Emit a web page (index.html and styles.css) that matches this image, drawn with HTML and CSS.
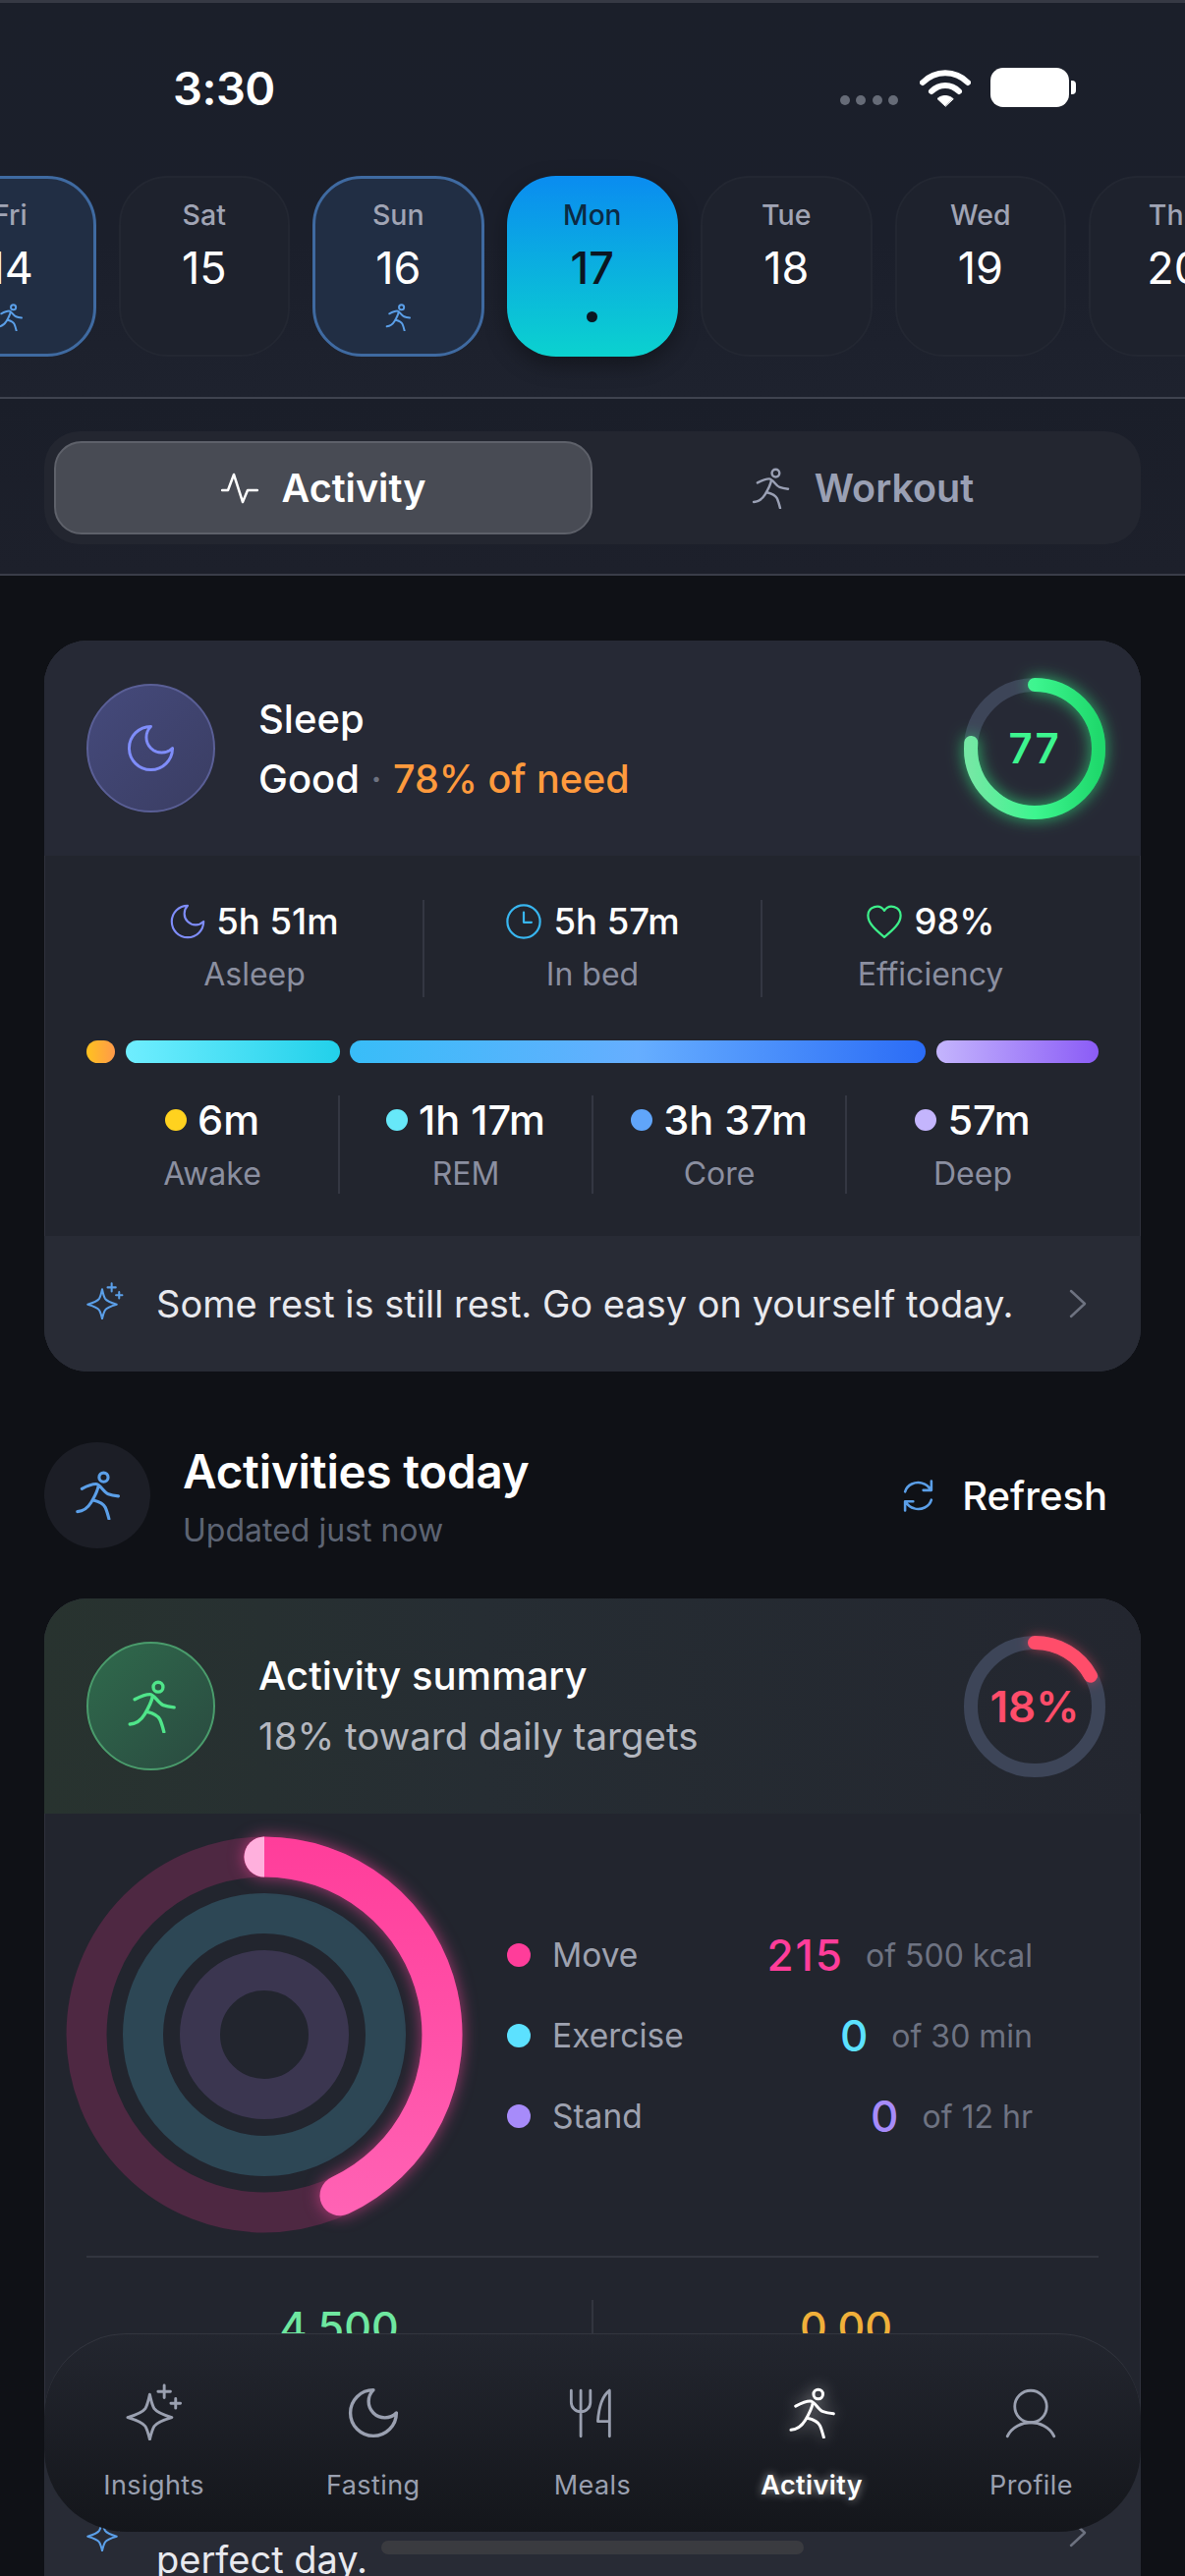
FILE: index.html
```html
<!DOCTYPE html>
<html lang="en">
<head>
<meta charset="utf-8">
<title>Activity</title>
<link rel="stylesheet" href="styles.css">
</head>
<body>
<svg class="defs" width="0" height="0" aria-hidden="true">
  <defs>
    <symbol id="runner" viewBox="0 0 24 24">
      <circle cx="15.1" cy="3.2" r="2.2"/>
      <path d="M4.5 8.8C7 7.5 9 6.5 11.3 6.5C13.5 6.5 15 10.5 17.4 11.4C19 12 20.5 12.2 22.3 12.4M12.6 7.3C12 10.5 10.5 13 9 15.5C7.5 18 5 19.8 2.3 20M10.1 14.4C12.5 15 15 16 15.9 17.9C16.5 19.2 17.2 21.5 17.7 23.5"/>
    </symbol>
    <symbol id="moon" viewBox="2 2 20 20">
      <path d="M12 3a6 6 0 0 0 9 9 9 9 0 1 1-9-9Z"/>
    </symbol>
    <symbol id="sparkle" viewBox="0 0 24 24">
      <path d="M10.1 4.6C10.8 8 11.2 9.3 12 10.6C13 12 15 13 19.4 14.3C15 15.6 13 16.6 12 18C11.2 19.3 10.8 20.6 10.1 23.6C9.4 20.6 9 19.3 8.2 18C7.2 16.6 5.2 15.6 0.8 14.3C5.2 13 7.2 12 8.2 10.6C9 9.3 9.4 8 10.1 4.6Z"/>
      <path d="M16.2 0.8V6M13.6 3.4H18.8M21 6.4V10.4M19 8.4H23"/>
    </symbol>
    <linearGradient id="scoreGreen" x1="0" y1="1" x2="0" y2="0">
      <stop offset="0" stop-color="#1fd96c"/>
      <stop offset="0.5" stop-color="#3df58f"/>
      <stop offset="1" stop-color="#74e8a4"/>
    </linearGradient>
    <linearGradient id="movePink" gradientUnits="userSpaceOnUse" x1="0" y1="0" x2="0" y2="380">
      <stop offset="0" stop-color="#ff3d9a"/>
      <stop offset="1" stop-color="#ff62b4"/>
    </linearGradient>
  </defs>
</svg>

<div class="screen">
  <header class="topbar">
    <div class="status">
      <span class="time">3:30</span>
      <div class="status-icons">
        <div class="signal"><i></i><i></i><i></i><i></i></div>
        <svg class="wifi" viewBox="0 0 52 40"><path d="M3 15C16 2 36 2 49 15" /><path d="M12 24C20 16 32 16 40 24"/><path class="wifi-dot" d="M26 39L18 31.5C22 27.5 30 27.5 34 31.5Z"/></svg>
        <div class="battery"><div class="battery-body"></div><div class="battery-nub"></div></div>
      </div>
    </div>
    <div class="dates">
      <div class="date done"><span class="dow">Fri</span><span class="num">14</span><svg class="mini ico"><use href="#runner"/></svg></div>
      <div class="date"><span class="dow">Sat</span><span class="num">15</span></div>
      <div class="date done"><span class="dow">Sun</span><span class="num">16</span><svg class="mini ico"><use href="#runner"/></svg></div>
      <div class="date today"><span class="dow">Mon</span><span class="num">17</span><i class="today-dot"></i></div>
      <div class="date"><span class="dow">Tue</span><span class="num">18</span></div>
      <div class="date"><span class="dow">Wed</span><span class="num">19</span></div>
      <div class="date"><span class="dow">Thu</span><span class="num">20</span></div>
    </div>
  </header>

  <div class="tabbar">
    <div class="segment">
      <div class="seg seg-on">
        <svg class="pulse" viewBox="0 0 38 32"><path d="M1 18H7L13 2L22 30L27 18H37"/></svg>
        <span>Activity</span>
      </div>
      <div class="seg">
        <svg class="seg-run ico"><use href="#runner"/></svg>
        <span>Workout</span>
      </div>
    </div>
  </div>

  <main class="content">
    <section class="card">
      <div class="card-head sleep-head">
        <div class="badge badge-sleep"><svg class="badge-ico ico"><use href="#moon"/></svg></div>
        <div class="head-text">
          <div class="head-title">Sleep</div>
          <div class="head-sub"><b class="good">Good</b><span class="sep"> · </span><span class="need">78% of need</span></div>
        </div>
        <svg class="score" viewBox="0 0 144 144">
          <circle class="score-track" cx="72" cy="72" r="65"/>
          <circle class="score-green" cx="72" cy="72" r="65" pathLength="100" transform="rotate(-90 72 72)"/>
          <text class="score-num" x="72" y="87" text-anchor="middle">77</text>
        </svg>
      </div>

      <div class="stats">
        <div class="stat">
          <div class="stat-val"><svg class="stat-ico ico c-moon"><use href="#moon"/></svg>5h 51m</div>
          <div class="stat-lab">Asleep</div>
        </div>
        <div class="stat">
          <div class="stat-val"><svg class="stat-ico ico c-clock" viewBox="0 0 24 24"><circle cx="12" cy="12" r="10.5"/><path d="M12 6V12.5H17"/></svg>5h 57m</div>
          <div class="stat-lab">In bed</div>
        </div>
        <div class="stat">
          <div class="stat-val"><svg class="stat-ico ico c-heart" viewBox="0 0 24 24"><path d="M12 22C6 17 1.5 13 1.5 8A5.7 5.7 0 0 1 12 5A5.7 5.7 0 0 1 22.500 8C22.500 13 18 17 12 22Z"/></svg>98%</div>
          <div class="stat-lab">Efficiency</div>
        </div>
      </div>

      <div class="bar">
        <i class="b b-awake"></i><i class="b b-rem"></i><i class="b b-core"></i><i class="b b-deep"></i>
      </div>

      <div class="phases">
        <div class="phase"><div class="phase-val"><i class="pdot d-awake"></i>6m</div><div class="phase-lab">Awake</div></div>
        <div class="phase"><div class="phase-val"><i class="pdot d-rem"></i>1h 17m</div><div class="phase-lab">REM</div></div>
        <div class="phase"><div class="phase-val"><i class="pdot d-core"></i>3h 37m</div><div class="phase-lab">Core</div></div>
        <div class="phase"><div class="phase-val"><i class="pdot d-deep"></i>57m</div><div class="phase-lab">Deep</div></div>
      </div>

      <div class="tip">
        <svg class="tip-ico ico"><use href="#sparkle"/></svg>
        <p class="tip-text">Some rest is still rest. Go easy on yourself today.</p>
        <svg class="chev" viewBox="0 0 20 30"><path d="M3 2L17 15L3 28"/></svg>
      </div>
    </section>

    <section class="section-head">
      <div class="section-badge"><svg class="section-ico ico"><use href="#runner"/></svg></div>
      <div class="section-text">
        <h2 class="section-title">Activities today</h2>
        <div class="section-sub">Updated just now</div>
      </div>
      <div class="refresh">
        <svg class="refresh-ico" viewBox="0 0 34 34"><path d="M4 13C6 6 14 2.500 21 4.500C25 5.500 27.500 8 29.500 11M30 2.500V11.500H22"/><path d="M30 21C28 28 20 31.500 13 29.500C9 28.500 6.500 26 4.500 23M4 31.500V22.500H12"/></svg>
        <span>Refresh</span>
      </div>
    </section>

    <section class="card">
      <div class="card-head summary-head">
        <div class="badge badge-run"><svg class="badge-ico ico"><use href="#runner"/></svg></div>
        <div class="head-text">
          <div class="sum-title">Activity summary</div>
          <div class="sum-sub">18% toward daily targets</div>
        </div>
        <svg class="score" viewBox="0 0 144 144">
          <circle class="score-track" cx="72" cy="72" r="65"/>
          <circle class="score-red" cx="72" cy="72" r="65" pathLength="100" transform="rotate(-90 72 72)"/>
          <text class="score-pct" x="72" y="88" text-anchor="middle">18%</text>
        </svg>
      </div>

      <div class="rings-row">
        <svg class="rings" viewBox="0 0 404 404">
          <circle class="ring r-move" cx="202" cy="202" r="181"/>
          <circle class="ring r-ex" cx="202" cy="202" r="123.500"/>
          <circle class="ring r-stand" cx="202" cy="202" r="65.500"/>
          <path class="ring-pink" d="M202 21A181 181 0 0 1 279 365.800"/>
          <path class="ring-cap" d="M202 0.500A20.500 20.500 0 0 0 202 41.500Z"/>
        </svg>
        <div class="legend">
          <div class="leg"><i class="ldot l-move"></i><span class="leg-name">Move</span><span class="leg-val v-move">215</span><span class="leg-of">of 500 kcal</span></div>
          <div class="leg"><i class="ldot l-ex"></i><span class="leg-name">Exercise</span><span class="leg-val v-ex">0</span><span class="leg-of">of 30 min</span></div>
          <div class="leg"><i class="ldot l-stand"></i><span class="leg-name">Stand</span><span class="leg-val v-stand">0</span><span class="leg-of">of 12 hr</span></div>
        </div>
      </div>

      <div class="metrics">
        <div class="metric"><div class="metric-val m-green">4,500</div></div>
        <div class="metric"><div class="metric-val m-amber">0.00</div></div>
      </div>

      <div class="tip tip-low">
        <svg class="tip-ico ico"><use href="#sparkle"/></svg>
        <p class="tip-text">perfect day.</p>
        <svg class="chev" viewBox="0 0 20 30"><path d="M3 2L17 15L3 28"/></svg>
      </div>
    </section>
  </main>

  <nav class="nav">
    <div class="nav-item">
      <svg class="nav-ico nav-spark ico"><use href="#sparkle"/></svg><span>Insights</span>
    </div>
    <div class="nav-item">
      <svg class="nav-ico ico"><use href="#moon"/></svg><span>Fasting</span>
    </div>
    <div class="nav-item">
      <svg class="nav-ico ico" viewBox="0 0 24 24"><path d="M2 1.500V7A4.500 4.500 0 0 0 11 7V1.500M6.500 1.500V23M20 1.500V23M20 1.500C16.500 4 15 9 14.500 16H20"/></svg><span>Meals</span>
    </div>
    <div class="nav-item nav-on">
      <svg class="nav-ico ico"><use href="#runner"/></svg><span>Activity</span>
    </div>
    <div class="nav-item">
      <svg class="nav-ico ico" viewBox="0 0 24 24"><circle cx="12" cy="9" r="7.500"/><path d="M1 23C3 18.500 8 16.500 12 16.500C16 16.500 21 18.500 23 23"/></svg><span>Profile</span>
    </div>
  </nav>
  <div class="home"></div>
</div>
</body>
</html>
```

FILE: styles.css
```css
* { box-sizing: border-box; }
html, body { margin: 0; padding: 0; background: #0f1116; }
body { font-family: Inter, "Liberation Sans", sans-serif; color: #fff; }
.defs { position: absolute; }
.screen { position: relative; width: 1206px; height: 2622px; overflow: hidden; background: #0f1116; }
.ico { fill: none; stroke: currentColor; stroke-linecap: round; stroke-linejoin: round; }

/* top */
.topbar { height: 406px; background: linear-gradient(180deg, #1b1f2a 0%, #1b1f2b 60%, #1e222e 100%); border-top: 3px solid #363944; border-bottom: 2px solid #3f434f; }
.status { height: 176px; display: flex; justify-content: space-between; padding: 0 111px 0 176px; position: relative; }
.time { font-size: 47px; font-weight: 600; line-height: 56px; margin-top: 59px; letter-spacing: -0.5px; }
.status-icons { display: flex; align-items: flex-start; margin-top: 66px; }
.signal { display: flex; gap: 6.500px; margin-top: 28px; }
.signal i { width: 10px; height: 10px; border-radius: 50%; background: #666b77; }
.wifi { width: 52px; height: 40px; margin-left: 22px; fill: none; stroke: #fff; stroke-width: 6; stroke-linecap: round; }
.wifi-dot { fill: #fff; stroke: #fff; stroke-width: 1; stroke-linejoin: round; }
.battery { display: flex; align-items: center; margin-left: 20px; }
.battery-body { width: 80px; height: 40px; border-radius: 13px; background: #fff; }
.battery-nub { width: 5px; height: 14px; margin-left: 2px; background: #fff; border-radius: 0 4px 4px 0; }

.dates { display: flex; gap: 23px; margin-left: -77px; }
.date { flex: 0 0 174.500px; height: 184px; border-radius: 50px; border: 2px solid #232732; background: #1e222d; display: flex; flex-direction: column; align-items: center; padding-top: 22px; }
.dow { font-size: 28.500px; line-height: 32px; font-weight: 500; color: #a0a4b4; }
.num { font-size: 45px; line-height: 54px; margin-top: 11px; color: #fff; }
.done { background: #212e44; border: 3px solid #3f6aa1; padding-top: 21px; }
.today { background: linear-gradient(180deg, #0a8cf0 0%, #0bd2cf 100%); border: 0; padding-top: 24px; box-shadow: 0 8px 22px rgba(0, 0, 0, .35); }
.today .dow { color: #0c2a44; font-size: 28px; }
.today .num { color: #0b1622; font-weight: 500; }
.today-dot { width: 11px; height: 11px; border-radius: 50%; background: #0b1622; margin-top: 17px; }
.mini { width: 28px; height: 28px; color: #5b9fe8; stroke-width: 1.700; margin-top: 9px; }

.tabbar { height: 180px; background: linear-gradient(180deg, #1a1e29 0%, #1d202b 100%); border-bottom: 2px solid #3a3d49; padding: 33px 45px 0; }
.segment { height: 115px; background: #232630; border-radius: 36px; padding: 10px; display: flex; }
.seg { flex: 1 1 50%; display: flex; align-items: center; justify-content: center; gap: 24px; font-size: 39.500px; font-weight: 600; color: #9aa0b4; }
.seg-on { background: #484b54; border: 2px solid #5e616a; border-radius: 28px; color: #fff; }
.pulse { width: 38px; height: 32px; fill: none; stroke: #fff; stroke-width: 2.500; stroke-linecap: round; stroke-linejoin: round; }
.seg-run { width: 42px; height: 42px; stroke-width: 1.400; color: #9aa0b4; }

.content { padding: 0 45px; margin-top: 66px; }
.card { background: #22252e; border-radius: 44px; overflow: hidden; box-shadow: inset 0 0 0 1px #2f323c; }

.card-head { height: 219px; display: flex; align-items: center; padding: 0 36px 0 43px; }
.sleep-head { background: #262935; }
.summary-head { background: linear-gradient(90deg, #28332f 0%, #262d33 40%, #23262f 100%); }
.badge { width: 131px; height: 131px; border-radius: 50%; display: flex; align-items: center; justify-content: center; flex: none; }
.badge-sleep { background: linear-gradient(135deg, #454a7c, #3a3d62); border: 2px solid #5a5f96; color: #7f8dfa; }
.badge-sleep .badge-ico { width: 49px; height: 49px; stroke-width: 1.200; }
.badge-run { background: linear-gradient(135deg, #2f6a4c, #2a4a40); border: 2px solid #4a9c6c; color: #4fe58a; }
.badge-ico { width: 54px; height: 54px; stroke-width: 1.500; }
.head-text { flex: 1; margin-left: 44px; }
.head-title { font-size: 40px; line-height: 52px; font-weight: 500; margin-top: 3px; }
.head-sub { font-size: 40px; line-height: 56px; margin-top: 7px; }
.good { font-weight: 500; }
.sep { color: #6d7280; }
.need { color: #ff9a3d; font-weight: 500; font-size: 39.500px; }
.score { width: 144px; height: 144px; flex: none; overflow: visible; }
.score-track { fill: none; stroke: #3d4558; stroke-width: 14; }
.score-green { fill: none; stroke: url(#scoreGreen); stroke-width: 14; stroke-linecap: round; stroke-dasharray: 76.500 100; filter: drop-shadow(0 0 8px rgba(50, 240, 130, .7)); }
.score-red { fill: none; stroke: #ff4d6a; stroke-width: 14; stroke-linecap: round; stroke-dasharray: 17 100; filter: drop-shadow(0 0 6px rgba(255, 77, 106, .5)); }
.score-num { font-family: Inter, sans-serif; font-size: 42px; font-weight: 600; fill: #3df58f; letter-spacing: 2px; }
.score-pct { font-family: Inter, sans-serif; font-size: 44px; font-weight: 600; fill: #ff4d6a; }

.stats { display: flex; margin: 45px 43px 0; }
.stat { flex: 1; height: 99px; border-left: 2px solid #343742; text-align: center; }
.stat:first-child { border-left: 0; }
.stat-val { height: 44px; display: flex; align-items: center; justify-content: center; gap: 11px; font-size: 36.500px; font-weight: 500; }
.stat-lab { font-size: 32px; line-height: 44px; margin-top: 10px; color: #8b8fa0; }
.stat-ico { width: 38px; height: 38px; stroke-width: 1.400; }
.c-moon { color: #7f8dfa; stroke-width: 1.200; width: 36px; height: 36px; }
.c-clock { color: #38b6f0; }
.c-heart { color: #3df08a; }

.bar { display: flex; gap: 10.500px; margin: 44px 43px 0; height: 23px; }
.b { display: block; height: 100%; border-radius: 12px; }
.b-awake { width: 29px; background: linear-gradient(90deg, #ffc21f, #ff9a4a); }
.b-rem { width: 218px; background: linear-gradient(90deg, #6feeff, #22d0ea); }
.b-core { width: 586px; background: linear-gradient(90deg, #38bdf8, #66aeff 50%, #2b6cf6); }
.b-deep { flex: 1; background: linear-gradient(90deg, #c4b5fd, #8b5cf6); }

.phases { display: flex; margin: 33px 43px 0; }
.phase { flex: 1; height: 100px; border-left: 2px solid #343742; text-align: center; }
.phase:first-child { border-left: 0; }
.phase-val { height: 50px; display: flex; align-items: center; justify-content: center; gap: 11px; font-size: 41.500px; font-weight: 500; }
.phase-lab { font-size: 32px; line-height: 40px; margin-top: 10px; color: #8b8fa0; }
.pdot { width: 22px; height: 22px; border-radius: 50%; flex: none; }
.d-awake { background: #ffd21f; }
.d-rem { background: #67e8f9; }
.d-core { background: #60a5fa; }
.d-deep { background: #c4b5fd; }

.tip { margin-top: 43px; height: 138px; background: #282b35; display: flex; align-items: center; padding: 0 54px 0 43px; }
.tip-ico { width: 38px; height: 38px; color: #5b9fe8; stroke-width: 1.300; flex: none; margin-top: -6px; }
.tip-text { flex: 1; margin: 0 0 0 33px; font-size: 38px; line-height: 54px; color: #e8e9ee; }
.chev { width: 20px; height: 30px; fill: none; stroke: #6d7280; stroke-width: 2.500; stroke-linecap: round; stroke-linejoin: round; flex: none; }

.section-head { display: flex; align-items: center; margin-top: 72px; height: 108px; }
.section-badge { width: 108px; height: 108px; border-radius: 50%; background: #1c1e26; display: flex; align-items: center; justify-content: center; flex: none; color: #5b9fe8; }
.section-ico { width: 50px; height: 50px; stroke-width: 1.500; }
.section-text { flex: 1; margin: 5px 0 0 33px; }
.section-title { margin: 0; font-size: 47.500px; line-height: 54px; font-weight: 600; letter-spacing: -0.2px; }
.section-sub { margin-top: 13px; font-size: 32px; line-height: 40px; color: #5d6473; }
.refresh { display: flex; align-items: center; gap: 27px; font-size: 40px; font-weight: 500; margin-right: 34px; }
.refresh-ico { width: 35px; height: 35px; fill: none; stroke: #5b9fe8; stroke-width: 2.500; stroke-linecap: round; stroke-linejoin: round; }

.section-head + .card { margin-top: 51px; }
.sum-title { font-size: 40px; line-height: 50px; font-weight: 500; }
.sum-sub { font-size: 38.500px; line-height: 50px; margin-top: 11px; color: #b4b7bf; }

.rings-row { height: 450px; display: flex; align-items: center; padding-left: 22px; }
.rings { width: 404px; height: 404px; flex: none; overflow: visible; }
.ring { fill: none; stroke-width: 41; }
.r-move { stroke: #4e2842; }
.r-ex { stroke: #2d4755; }
.r-stand { stroke: #3b3650; }
.ring-pink { fill: none; stroke: url(#movePink); stroke-width: 41; stroke-linecap: round; filter: drop-shadow(0 0 8px rgba(255, 70, 160, .6)); }
.ring-cap { fill: #ffb0dd; }
.legend { margin: 2px 0 0 45px; width: 535px; display: flex; flex-direction: column; }
.leg { height: 82px; display: flex; align-items: center; }
.ldot { width: 24px; height: 24px; border-radius: 50%; flex: none; }
.l-move { background: #ff3d9a; }
.l-ex { background: #5ce1ff; }
.l-stand { background: #a78bfa; }
.leg-name { margin-left: 22px; font-size: 33.500px; color: #9ea2b0; }
.leg-val { margin-left: auto; font-size: 44px; font-weight: 500; letter-spacing: 2px; }
.leg-of { margin-left: 22px; font-size: 32px; color: #6e7382; }
.v-move { color: #ff3d9a; }
.v-ex { color: #5ce1ff; }
.v-stand { color: #a78bfa; }

.metrics { margin: 0 43px; border-top: 2px solid #32353f; padding-top: 43px; display: flex; height: 190px; }
.metric { flex: 1; text-align: center; height: 110px; }
.metric + .metric { border-left: 2px solid #32353f; }
.metric-val { font-size: 43px; line-height: 50px; font-weight: 500; margin-top: 2px; }
.m-green { color: #6ee7a0; }
.m-amber { color: #f0b03a; }
.tip-low { margin-top: 0; height: 200px; align-items: flex-start; padding-top: 73px; }
.tip-low .tip-ico { margin-top: 0; }
.tip-low .tip-text { margin-top: 19px; }
.tip-low .chev { margin-top: 4px; }

/* bottom nav overlays the scrolling content */
.nav { position: absolute; left: 45px; top: 2375px; width: 1116px; height: 202px; border-radius: 84px; background: linear-gradient(180deg, #23262f 0%, #14161b 100%); box-shadow: inset 0 1px 0 #33363f; display: flex; }
.nav-item { flex: 1; display: flex; flex-direction: column; align-items: center; padding-top: 55px; color: #9aa0b0; font-size: 27px; letter-spacing: .4px; }
.nav-ico { width: 52px; height: 52px; stroke-width: 1.300; }
.nav-spark { width: 58px; height: 58px; margin-top: -4px; margin-bottom: -2px; stroke-width: 1.200; }
.nav-item span { margin-top: 31px; line-height: 34px; }
.nav-on { color: #fff; font-weight: 600; }
.nav-on .nav-ico { filter: drop-shadow(0 0 8px rgba(255, 255, 255, .55)); stroke-width: 1.400; }
.nav-on span { text-shadow: 0 0 10px rgba(255, 255, 255, .6); }
.home { position: absolute; left: 388px; top: 2586px; width: 430px; height: 14px; border-radius: 7px; background: #3a3b40; }
```
